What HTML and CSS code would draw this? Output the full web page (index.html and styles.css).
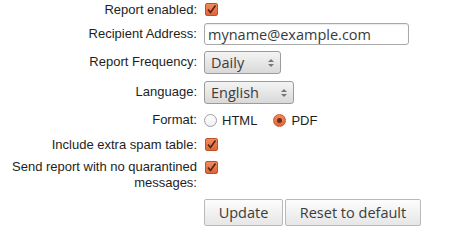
FILE: index.html
```html
<!DOCTYPE html>
<html>
  <head>
    <title>Report settings</title>
    <link rel="stylesheet" href="styles.css">
  </head>
  <body>
    <form class="report-form">
      <div class="row row-enabled">
        <label class="field-label">Report enabled:</label>
        <div class="field"><span class="check"><svg viewBox="0 0 13 13" width="13" height="13"><path d="M3 6.5 L5.5 9.5 L10.5 2.5" fill="none" stroke="#4a2618" stroke-width="1.6"/></svg></span></div>
      </div>

      <div class="row row-address">
        <label class="field-label">Recipient Address:</label>
        <div class="field"><input class="text-input" type="text" value="myname@example.com"></div>
      </div>

      <div class="row row-frequency">
        <label class="field-label">Report Frequency:</label>
        <div class="field">
          <span class="select-wrap select-daily">
            <select class="select-box"><option>Daily</option><option>Weekly</option><option>Monthly</option></select>
          </span>
        </div>
      </div>

      <div class="row row-language">
        <label class="field-label">Language:</label>
        <div class="field">
          <span class="select-wrap select-lang">
            <select class="select-box"><option>English</option></select>
          </span>
        </div>
      </div>

      <div class="row row-format">
        <label class="field-label">Format:</label>
        <div class="field radios">
          <span class="radio"></span><span class="radio-text">HTML</span>
          <span class="radio radio-on"></span><span class="radio-text">PDF</span>
        </div>
      </div>

      <div class="row row-spam">
        <label class="field-label">Include extra spam table:</label>
        <div class="field"><span class="check"><svg viewBox="0 0 13 13" width="13" height="13"><path d="M3 6.5 L5.5 9.5 L10.5 2.5" fill="none" stroke="#4a2618" stroke-width="1.6"/></svg></span></div>
      </div>

      <div class="row row-noquar">
        <label class="field-label">Send report with no quarantined messages:</label>
        <div class="field"><span class="check"><svg viewBox="0 0 13 13" width="13" height="13"><path d="M3 6.5 L5.5 9.5 L10.5 2.5" fill="none" stroke="#4a2618" stroke-width="1.6"/></svg></span></div>
      </div>

      <div class="row row-buttons">
        <div></div>
        <div class="field buttons">
          <button class="btn btn-update" type="button">Update</button>
          <button class="btn btn-reset" type="button">Reset to default</button>
        </div>
      </div>
    </form>
  </body>
</html>
```

FILE: styles.css
```css
body{
  margin: 0;
  background-color: white;
  font-family: "Liberation Sans", Arial, sans-serif;
  font-size: 13px;
  color: #1e1e1e;
}

.report-form{
  display: flex;
  flex-direction: column;
}

.row{
  display: grid;
  grid-template-columns: 197px 1fr;
  column-gap: 7px;
  align-items: center;
}
.row-enabled{ height: 19px; }
.row-address{ height: 30px; }
.row-frequency{ height: 26px; }
.row-language{ height: 34px; }
.row-format{ height: 22px; }
.row-spam{ height: 27px; }
.row-noquar{
  height: 33px;
  align-items: start;
  padding-top: 1px;
}
.row-buttons{ padding-top: 7px; }

.field-label{
  text-align: right;
  line-height: 16px;
  padding-left: 12px;
}

.field{
  display: flex;
  align-items: center;
}

/* orange ubuntu style checkbox */
.check{
  display: block;
  width: 13px;
  height: 13px;
  margin-left: 1px;
  border-radius: 2px;
  box-sizing: border-box;
  background: linear-gradient(#f28a5c, #e3643a);
  border: 1px solid #b9532c;
  position: relative;
}
.check svg{
  position: absolute;
  left: -1px;
  top: -1px;
}
.row-noquar .check{ margin-top: 2px; }

.text-input{
  width: 205px;
  height: 22px;
  box-sizing: border-box;
  border: 1px solid #a9a9a9;
  border-radius: 3px;
  padding: 0 3px;
  font-family: "Open Sans", sans-serif;
  font-size: 14.5px;
  color: #3a3a3a;
  box-shadow: inset 0 1px 1px rgba(0,0,0,0.08);
}

.select-wrap{
  position: relative;
  display: block;
}
.select-box{
  appearance: none;
  -webkit-appearance: none;
  height: 23px;
  box-sizing: border-box;
  border: 1px solid #9c9c9c;
  border-radius: 3px;
  background: linear-gradient(#f4f4f4, #d9d9d9);
  padding: 0 0 0 6px;
  font-family: "Open Sans", sans-serif;
  font-size: 14.5px;
  color: #3c3c3c;
}
.select-daily .select-box{ width: 77px; }
.select-lang .select-box{ width: 90px; }
.select-wrap::before,
.select-wrap::after{
  content: "";
  position: absolute;
  right: 7px;
  border-left: 3px solid transparent;
  border-right: 3px solid transparent;
}
.select-wrap::before{
  top: 8px;
  border-bottom: 3px solid #777;
}
.select-wrap::after{
  top: 13px;
  border-top: 3px solid #777;
}

.radio{
  width: 13px;
  height: 13px;
  box-sizing: border-box;
  border-radius: 50%;
  border: 1px solid #a0a0a0;
  background: linear-gradient(#ffffff, #f0f0f0);
  position: relative;
}
.radio-on{
  border-color: #c25a30;
  background: linear-gradient(#f28a5c, #e3643a);
}
.radio-on::after{
  content: "";
  position: absolute;
  left: 3px;
  top: 3px;
  width: 5px;
  height: 5px;
  border-radius: 50%;
  background: #6b2e18;
}
.radio-text{
  margin-left: 5px;
  margin-right: 16px;
}

.buttons{
  gap: 2px;
}
.btn{
  height: 27px;
  border: 1px solid #b9b9b9;
  border-radius: 2px;
  background: linear-gradient(#fdfdfd, #e6e6e6);
  font-family: "Open Sans", sans-serif;
  font-size: 14.5px;
  color: #3c3c3c;
  padding: 0;
}
.btn-update{ width: 79px; }
.btn-reset{ width: 136px; }
```
